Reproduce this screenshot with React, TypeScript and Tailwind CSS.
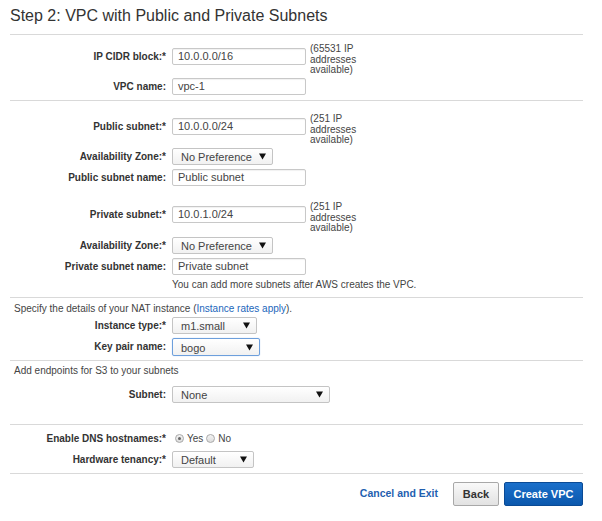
import type { ReactNode } from 'react';

const Caret = () => (
  <svg width="7" height="7" viewBox="0 0 7 7" className="shrink-0">
    <path d="M0 0.5 H7 L3.5 6.5 Z" fill="#111" />
  </svg>
);

const TextBox = ({ value }: { value: string }) => (
  <div className="flex h-[17px] w-[134px] items-center rounded-[2px] border border-[#c8c8c8] bg-white pl-[5px] text-[11px] text-[#444] shadow-[inset_0_1px_1px_rgba(0,0,0,0.06)]">
    {value}
  </div>
);

const Select = ({ value, width, focused }: { value: string; width: string; focused?: boolean }) => (
  <div
    className={`flex items-center justify-between rounded-[2px] border bg-gradient-to-b from-white to-[#f1f1f1] pl-[8px] pr-[6px] text-[11px] text-[#444] ${width} ${
      focused ? 'h-[18px] border-[#6d9fdc] shadow-[0_0_1px_#8db4e8]' : 'h-[17px] border-[#c4c4c4]'
    }`}
  >
    <span className="pt-[2px]">{value}</span>
    <Caret />
  </div>
);

const Helper = ({ count }: { count: string }) => (
  <div className="-mt-[4px] ml-[4px] text-[10px] leading-[10.5px] text-[#444]">
    ({count} IP
    <br />
    addresses
    <br />
    available)
  </div>
);

const Row = ({ label, children, className = '' }: { label: string; children: ReactNode; className?: string }) => (
  <div className={`flex items-start ${className}`}>
    <div className="flex h-[17px] w-[156px] items-center justify-end text-[10px] font-bold text-[#333]">{label}</div>
    <div className="ml-[6px] flex items-start">{children}</div>
  </div>
);

const Radio = ({ checked }: { checked?: boolean }) => (
  <span className="flex h-[9px] w-[9px] items-center justify-center rounded-full border border-[#a9a9a9] bg-gradient-to-b from-[#f4f4f4] to-[#dcdcdc]">
    {checked && <span className="h-[3px] w-[3px] rounded-full bg-[#666]" />}
  </span>
);

const Divider = () => <div className="w-[573px] border-t border-[#d9d9d9]" />;

export default function App() {
  return (
    <div className="h-[521px] w-[602px] bg-white pl-[10px] font-['Liberation_Sans',Arial,sans-serif] text-[#333]">
      <h1 className="pt-[7px] pb-[9px] text-[16px] leading-[18px] text-[#333]">Step 2: VPC with Public and Private Subnets</h1>
      <Divider />

      {/* VPC */}
      <div className="pt-[13px] pb-[5px]">
        <Row label="IP CIDR block:*" className="h-[30px]">
          <TextBox value="10.0.0.0/16" />
          <Helper count="65531" />
        </Row>
        <Row label="VPC name:">
          <TextBox value="vpc-1" />
        </Row>
      </div>
      <Divider />

      {/* subnets */}
      <div className="pt-[17px]">
        <Row label="Public subnet:*" className="h-[30px]">
          <TextBox value="10.0.0.0/24" />
          <Helper count="251" />
        </Row>
        <Row label="Availability Zone:*" className="h-[21px]">
          <Select value="No Preference" width="w-[101px]" />
        </Row>
        <Row label="Public subnet name:" className="h-[37px]">
          <TextBox value="Public subnet" />
        </Row>
        <Row label="Private subnet:*" className="h-[31px]">
          <TextBox value="10.0.1.0/24" />
          <Helper count="251" />
        </Row>
        <Row label="Availability Zone:*" className="h-[21px]">
          <Select value="No Preference" width="w-[101px]" />
        </Row>
        <Row label="Private subnet name:" className="h-[20px]">
          <TextBox value="Private subnet" />
        </Row>
        <div className="pl-[162px] pb-[5px] text-[10px] leading-[14px] text-[#444]">
          You can add more subnets after AWS creates the VPC.
        </div>
      </div>
      <Divider />

      {/* NAT */}
      <div className="pt-[4px] pb-[4px]">
        <div className="pl-[4px] text-[10px] leading-[13px] text-[#444]">
          Specify the details of your NAT instance (<span className="text-[#2266bb]">Instance rates apply</span>).
        </div>
        <Row label="Instance type:*" className="mt-[2px] h-[21px]">
          <Select value="m1.small" width="w-[85px]" />
        </Row>
        <Row label="Key pair name:">
          <Select value="bogo" width="w-[88px]" focused />
        </Row>
      </div>
      <Divider />

      {/* S3 */}
      <div className="pt-[3px] pb-[21px]">
        <div className="pl-[4px] text-[10px] leading-[13px] text-[#444]">Add endpoints for S3 to your subnets</div>
        <Row label="Subnet:" className="mt-[9px]">
          <Select value="None" width="w-[158px]" />
        </Row>
      </div>
      <Divider />

      {/* DNS */}
      <div className="pt-[5px] pb-[5px]">
        <Row label="Enable DNS hostnames:*" className="h-[21px]">
          <div className="flex h-[17px] items-center gap-[3px] pl-[3px] text-[10px] text-[#444]">
            <Radio checked />
            <span>Yes</span>
            <Radio />
            <span>No</span>
          </div>
        </Row>
        <Row label="Hardware tenancy:*">
          <Select value="Default" width="w-[82px]" />
        </Row>
      </div>
      <Divider />

      {/* actions */}
      <div className="flex w-[573px] items-center justify-end gap-[5px] pt-[8px]">
        <span className="mr-[10px] text-[10.5px] font-bold text-[#1f5fb0]">Cancel and Exit</span>
        <button className="h-[24px] w-[46px] rounded-[2px] border border-[#a8a8a8] bg-gradient-to-b from-[#f9f9f9] to-[#e2e2e2] text-[11px] font-bold text-[#333]">
          Back
        </button>
        <button className="h-[24px] w-[79px] rounded-[2px] border border-[#0a4a95] bg-gradient-to-b from-[#1a6fca] to-[#0b58ad] text-[11px] font-bold text-white">
          Create VPC
        </button>
      </div>
    </div>
  );
}
